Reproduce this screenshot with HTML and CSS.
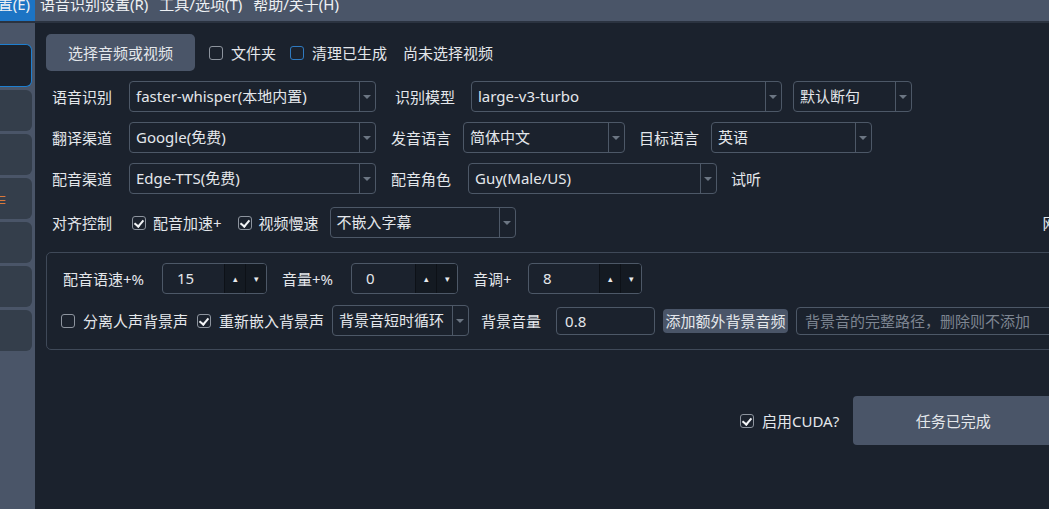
FILE: index.html
```html
<!DOCTYPE html>
<html lang="zh-CN">
<head>
    <meta charset="UTF-8">
    <meta name="viewport" content="width=device-width, initial-scale=1.0">
    <title>视频翻译配音</title>
    <link rel="stylesheet" href="styles.css">
</head>
<body>
    <div class="menubar">
        <span class="menu-item active">置(E)</span>
        <span class="menu-item">语音识别设置(R)</span>
        <span class="menu-item">工具/选项(T)</span>
        <span class="menu-item">帮助/关于(H)</span>
    </div>

    <div class="window">
        <div class="sidebar">
            <div class="side-btn selected"></div>
            <div class="side-btn"></div>
            <div class="side-btn"></div>
            <div class="side-btn"><span class="side-mark">≡</span></div>
            <div class="side-btn"></div>
            <div class="side-btn"></div>
            <div class="side-btn"></div>
        </div>

        <div class="content">
            <!-- source file -->
            <div class="row row-top">
                <button class="btn btn-pick">选择音频或视频</button>
                <label class="check"><span class="box"></span>文件夹</label>
                <label class="check"><span class="box box-focus"></span>清理已生成</label>
                <span class="hint">尚未选择视频</span>
            </div>

            <!-- recognition -->
            <div class="row">
                <span class="label">语音识别</span>
                <div class="combo w-247">faster-whisper(本地内置)</div>
                <span class="sublabel lead-19 w-76">识别模型</span>
                <div class="combo w-311">large-v3-turbo</div>
                <div class="combo w-119 lead-11">默认断句</div>
            </div>

            <!-- translation -->
            <div class="row">
                <span class="label">翻译渠道</span>
                <div class="combo w-247">Google(免费)</div>
                <span class="sublabel lead-15 w-72">发音语言</span>
                <div class="combo w-162">简体中文</div>
                <span class="sublabel lead-14 w-72">目标语言</span>
                <div class="combo w-161">英语</div>
            </div>

            <!-- dubbing -->
            <div class="row">
                <span class="label">配音渠道</span>
                <div class="combo w-247">Edge-TTS(免费)</div>
                <span class="sublabel lead-15 w-77">配音角色</span>
                <div class="combo w-249">Guy(Male/US)</div>
                <span class="plain lead-14">试听</span>
            </div>

            <!-- alignment -->
            <div class="row row-align">
                <span class="label">对齐控制</span>
                <label class="check check-tight"><span class="box checked"></span>配音加速+</label>
                <label class="check check-tight"><span class="box checked"></span>视频慢速</label>
                <div class="combo w-186">不嵌入字幕</div>
                <span class="plain cut-off">网页</span>
            </div>

            <div class="group">
                <div class="row row-spin">
                    <span class="sublabel w-99">配音语速+%</span>
                    <div class="spin w-105"><span class="spin-value">15</span><span class="spin-btn">▴</span><span class="spin-btn">▾</span></div>
                    <span class="sublabel lead-15 w-69">音量+%</span>
                    <div class="spin w-107"><span class="spin-value">0</span><span class="spin-btn">▴</span><span class="spin-btn">▾</span></div>
                    <span class="sublabel lead-15 w-55">音调+</span>
                    <div class="spin w-114"><span class="spin-value">8</span><span class="spin-btn">▴</span><span class="spin-btn">▾</span></div>
                </div>
                <div class="row row-bg">
                    <label class="check check-bg"><span class="box"></span>分离人声背景声</label>
                    <label class="check check-bg"><span class="box checked"></span>重新嵌入背景声</label>
                    <div class="combo w-137">背景音短时循环</div>
                    <span class="plain lead-12">背景音量</span>
                    <div class="field w-99 lead-15">0.8</div>
                    <button class="btn btn-small">添加额外背景音频</button>
                    <div class="field field-path">背景音的完整路径，删除则不添加</div>
                </div>
            </div>

            <div class="row row-run">
                <label class="check"><span class="box checked"></span>启用CUDA?</label>
                <button class="btn btn-run">任务已完成</button>
            </div>
        </div>
    </div>
</body>
</html>
```

FILE: styles.css
```css
* {
    box-sizing: border-box;
}
html, body {
    margin: 0;
    padding: 0;
    width: 1049px;
    height: 509px;
    overflow: hidden;
}
body {
    font-family: 'Noto Sans', 'Noto Sans CJK SC', sans-serif;
    font-size: 15px;
    color: #e4e7eb;
    background-color: #1b222d;
    display: flex;
    flex-direction: column;
}

.menubar {
    height: 23px;
    flex: none;
    display: flex;
    background-color: #4a5568;
    border-bottom: 2px solid #2b3340;
    overflow: hidden;
}
.menu-item {
    height: 21px;
    line-height: 8px;
    padding: 0 6px;
    color: #eef1f4;
    white-space: nowrap;
}
.menu-item.active {
    background-color: #1c74c4;
    padding: 0 5px 0 0;
    width: 35px;
    text-align: right;
    direction: rtl;
    overflow: hidden;
}
.menu-item + .menu-item {
    padding-left: 5px;
}

.window {
    flex: 1;
    display: flex;
    min-height: 0;
}

/* left navigation strip */
.sidebar {
    width: 35px;
    flex: none;
    background-color: #4a5568;
    padding-top: 21px;
    display: flex;
    flex-direction: column;
    gap: 3px;
}
.side-btn {
    width: 32px;
    height: 41px;
    background-color: #343e4b;
    border-radius: 0 6px 6px 0;
    display: flex;
    align-items: center;
    overflow: hidden;
}
.side-btn.selected {
    height: 43px;
    background-color: #1b222d;
    border: 1px solid #1e7fd0;
    border-left: none;
}
.side-mark {
    color: #d9793a;
    font-size: 14px;
    margin-left: -7px;
}

.content {
    flex: 1;
    padding: 11px 0 0 11px;
    overflow: hidden;
}

.row {
    display: flex;
    align-items: center;
    white-space: nowrap;
    height: 31px;
    margin-top: 10px;
}
.row-top {
    height: 37px;
    margin-top: 0;
    margin-bottom: 1px;
}
.row-align {
    margin-top: 13px;
}

.label {
    width: 83px;
    padding-left: 6px;
    flex: none;
}
.sublabel {
    flex: none;
}
.plain {
    flex: none;
}
.hint {
    margin-left: 16px;
}
.cut-off {
    margin-left: 527px;
}

.lead-11 { margin-left: 11px; }
.lead-12 { margin-left: 12px; }
.lead-14 { margin-left: 14px; }
.lead-15 { margin-left: 15px; }
.lead-19 { margin-left: 19px; }

.btn {
    font-family: inherit;
    font-size: 15px;
    color: #e4e7eb;
    background-color: #4a5568;
    border: none;
    border-radius: 5px;
    padding: 0;
    flex: none;
}
.btn-pick {
    width: 149px;
    height: 37px;
}
.btn-small {
    height: 24px;
    width: 125px;
    margin-left: 8px;
    border-radius: 4px;
    white-space: nowrap;
    overflow: hidden;
}
.btn-run {
    width: 200px;
    height: 49px;
    margin-left: 14px;
    border-radius: 4px;
}

/* checkboxes */
.check {
    display: flex;
    align-items: center;
    margin-left: 14px;
    flex: none;
}
.box {
    width: 14px;
    height: 14px;
    border: 1px solid #8d949e;
    border-radius: 3px;
    margin-right: 8px;
    position: relative;
}
.box-focus {
    border-color: #2f7ac0;
}
.box.checked::after {
    content: "";
    position: absolute;
    left: 3px;
    top: 1px;
    width: 4px;
    height: 7px;
    border: solid #f2f4f6;
    border-width: 0 2px 2px 0;
    transform: rotate(40deg);
}
.check-tight {
    margin-left: 3px;
    margin-right: 13px;
}
.check-tight + .check-tight {
    margin-right: 11px;
}
.check-tight .box {
    margin-right: 7px;
}

/* combo boxes */
.combo {
    height: 31px;
    flex: none;
    border: 1px solid #4d5867;
    border-radius: 4px;
    padding: 0 22px 0 6px;
    line-height: 29px;
    position: relative;
    overflow: hidden;
}
.combo::before {
    content: "";
    position: absolute;
    right: 15px;
    top: 0;
    bottom: 0;
    border-left: 1px solid #4d5867;
}
.combo::after {
    content: "";
    position: absolute;
    right: 4px;
    top: 13px;
    border-left: 4px solid transparent;
    border-right: 4px solid transparent;
    border-top: 4px solid #6c7683;
}

.w-55 { width: 55px; }
.w-69 { width: 69px; }
.w-72 { width: 72px; }
.w-76 { width: 76px; }
.w-77 { width: 77px; }
.w-99 { width: 99px; }
.w-105 { width: 105px; }
.w-107 { width: 107px; }
.w-114 { width: 114px; }
.w-119 { width: 119px; }
.w-137 { width: 137px; }
.w-161 { width: 161px; }
.w-162 { width: 162px; }
.w-186 { width: 186px; }
.w-247 { width: 247px; }
.w-249 { width: 249px; }
.w-311 { width: 311px; }

/* settings group */
.group {
    margin-top: 14px;
    width: 1020px;
    height: 98px;
    border: 1px solid #3f4958;
    border-radius: 5px;
    padding: 10px 0 0 16px;
}
.row-spin {
    margin-top: 0;
}
.spin {
    height: 31px;
    flex: none;
    display: flex;
    border: 1px solid #4d5867;
    border-radius: 4px;
    overflow: hidden;
}
.spin-value {
    flex: 1;
    padding-left: 14px;
    line-height: 29px;
}
.spin-btn {
    width: 21px;
    background-color: #141a22;
    border-left: 1px solid #0d1117;
    color: #e8eaed;
    font-size: 9px;
    text-align: center;
    line-height: 29px;
}

.row-bg {
    margin-top: 11px;
}
.check-bg {
    margin-left: -2px;
    margin-right: 9px;
}
.check-bg + .check-bg {
    margin-left: 0;
    margin-right: 8px;
}
.field {
    height: 28px;
    flex: none;
    border: 1px solid #4d5867;
    border-radius: 4px;
    padding-left: 8px;
    line-height: 26px;
}
.field-path {
    width: 280px;
    margin-left: 8px;
    color: #7d8591;
}

.row-run {
    margin-top: 46px;
    height: 49px;
    padding-left: 680px;
}
```
